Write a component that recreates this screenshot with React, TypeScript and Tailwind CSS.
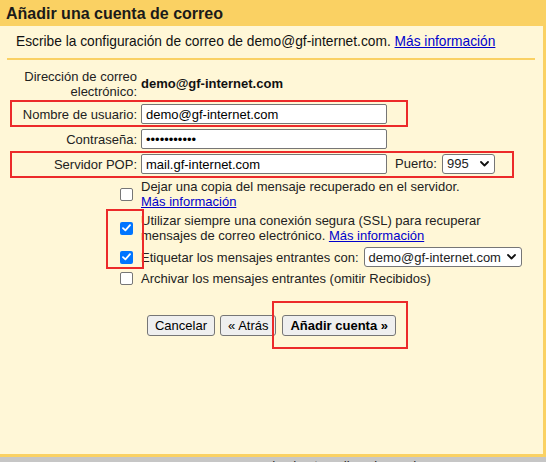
import React from "react";

function Checkbox({ checked }: { checked?: boolean }) {
  if (checked) {
    return (
      <span className="flex h-[13px] w-[13px] items-center justify-center rounded-[2px] bg-[#0075ff]">
        <svg width="9" height="8" viewBox="0 0 9 8" fill="none">
          <path d="M1 4.2 L3.4 6.4 L8 1.2" stroke="white" strokeWidth="1.8" strokeLinecap="round" strokeLinejoin="round" />
        </svg>
      </span>
    );
  }
  return <span className="block h-[13px] w-[13px] rounded-[2px] border border-[#767676] bg-white" />;
}

function Chevron() {
  return (
    <svg width="9" height="6" viewBox="0 0 9 6" fill="none">
      <path d="M1 1 L4.5 4.5 L8 1" stroke="#111" strokeWidth="1.8" strokeLinecap="round" strokeLinejoin="round" />
    </svg>
  );
}

function FakeSelect({ value, className }: { value: string; className: string }) {
  return (
    <div className={`flex h-[20px] items-center justify-between rounded-[3px] border border-[#767676] bg-white pl-[4px] pr-[5px] ${className}`}>
      <span>{value}</span>
      <Chevron />
    </div>
  );
}

function TextBox({ value, type = "text" }: { value: string; type?: string }) {
  return (
    <input
      type={type}
      defaultValue={value}
      className="h-[20px] w-[246px] rounded-[2px] border border-[#767676] bg-white px-[4px] text-[13px] text-black outline-none"
    />
  );
}

function Row({ label, children }: { label: React.ReactNode; children: React.ReactNode }) {
  return (
    <div className="grid grid-cols-[137px_1fr] items-center gap-x-[4px]">
      <div className="text-right leading-[15px]">{label}</div>
      <div className="flex items-center">{children}</div>
    </div>
  );
}

function CheckRow({ checked, children }: { checked?: boolean; children: React.ReactNode }) {
  return (
    <div className="grid grid-cols-[137px_1fr] items-center gap-x-[4px]">
      <div className="flex justify-end pr-[4px]">
        <Checkbox checked={checked} />
      </div>
      <div className="leading-[15px]">{children}</div>
    </div>
  );
}

const link = "text-[#0000cc] underline";

export default function App() {
  return (
    <div className="relative h-[462px] w-[546px] overflow-hidden bg-[#c6c6c6] font-['Liberation_Sans',Arial,sans-serif] text-[13px] text-[#222]">
      <div className="flex h-[457px] flex-col bg-[#fad163] pb-[3px] pr-[3px]">
        <div className="h-[26px] pl-[6px] pt-[1px] text-[16px] font-bold leading-[26px] text-[#1a1a1a]">
          Añadir una cuenta de correo
        </div>

        <div className="flex flex-1 flex-col bg-[#fff7d7]">
          <div className="h-[32px] pl-[16px] text-[13.75px] leading-[32px] text-[#111]">
            Escribe la configuración de correo de demo@gf-internet.com. <a className={link}>Más información</a>
          </div>
          <div className="ml-[7px] mr-[8px] h-[2px] bg-[#fad163]" />

          <div className="flex flex-col gap-[5px] pt-[9px]">
            <Row
              label={
                <>
                  Dirección de correo
                  <br />
                  electrónico:
                </>
              }
            >
              <span className="font-bold text-[#111]">demo@gf-internet.com</span>
            </Row>
            <Row label="Nombre de usuario:">
              <TextBox value="demo@gf-internet.com" />
            </Row>
            <Row label="Contraseña:">
              <TextBox type="password" value="abcdefghijk" />
            </Row>
            <Row label="Servidor POP:">
              <TextBox value="mail.gf-internet.com" />
              <span className="ml-[8px]">Puerto:</span>
              <FakeSelect value="995" className="ml-[5px] w-[53px]" />
            </Row>
          </div>

          <div className="mt-[5px] flex flex-col gap-[4px]">
            <CheckRow>
              Dejar una copia del mensaje recuperado en el servidor.
              <br />
              <a className={link}>Más información</a>
            </CheckRow>
            <CheckRow checked>
              Utilizar siempre una conexión segura (SSL) para recuperar
              <br />
              mensajes de correo electrónico. <a className={link}>Más información</a>
            </CheckRow>
            <CheckRow checked>
              <div className="flex items-center">
                <span>Etiquetar los mensajes entrantes con:</span>
                <FakeSelect value="demo@gf-internet.com" className="ml-[5px] w-[158px]" />
              </div>
            </CheckRow>
            <CheckRow>Archivar los mensajes entrantes (omitir Recibidos)</CheckRow>
          </div>

          <div className="mt-[29px] flex justify-center gap-[5px]">
            <button className="h-[21px] rounded-[3px] border border-[#767676] bg-[#efefef] px-[7px] leading-none text-black">
              Cancelar
            </button>
            <button className="h-[21px] rounded-[3px] border border-[#767676] bg-[#efefef] px-[7px] leading-none text-black">
              « Atrás
            </button>
            <button className="ml-[1px] h-[21px] rounded-[3px] border border-[#767676] bg-[#efefef] px-[7px] font-bold leading-none text-black">
              Añadir cuenta »
            </button>
          </div>
        </div>
      </div>

      <div className="pl-[268px] pt-[2px] leading-[13px] text-[#222]">desde otras direcciones de correo</div>

      {/* red annotation boxes */}
      <div className="absolute left-[10px] top-[100px] h-[27px] w-[398px] border-2 border-[#ec2a2a]" />
      <div className="absolute left-[10px] top-[151px] h-[27px] w-[504px] border-2 border-[#ec2a2a]" />
      <div className="absolute left-[106px] top-[209px] h-[60px] w-[38px] border-2 border-[#ec2a2a]" />
      <div className="absolute left-[272px] top-[301px] h-[48px] w-[136px] border-2 border-[#ec2a2a]" />
    </div>
  );
}
